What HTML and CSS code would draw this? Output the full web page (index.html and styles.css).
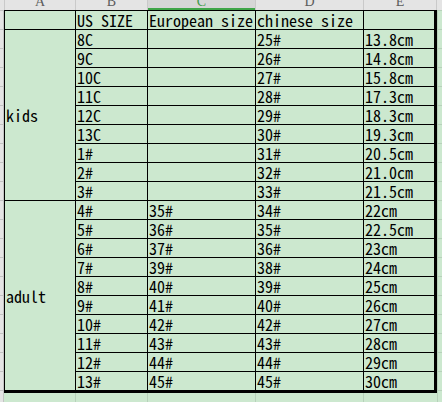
FILE: index.html
```html
<!DOCTYPE html>
<html>
<head>
<meta charset="utf-8">
<link rel="stylesheet" href="styles.css">
</head>
<body>
<div class="sheet">
  <div class="col-head">
    <div class="corner"></div>
    <div class="hcell w70"><span>A</span></div>
    <div class="hcell w71"><span>B</span></div>
    <div class="hcell w107 sel"><span>C</span></div>
    <div class="hcell w107"><span>D</span></div>
    <div class="hcell w72"><span>E</span></div>
    <div class="hcell rest"></div>
  </div>
  <div class="body-row">
    <div class="gutter"></div>
    <div class="area">
      <div class="table">
        <div class="c"></div><div class="c">US SIZE</div><div class="c">European size</div><div class="c">chinese size</div><div class="c"></div>

        <div class="c merged kids">kids</div>
        <div class="c">8C</div><div class="c"></div><div class="c">25#</div><div class="c">13.8cm</div>
        <div class="c">9C</div><div class="c"></div><div class="c">26#</div><div class="c">14.8cm</div>
        <div class="c">10C</div><div class="c"></div><div class="c">27#</div><div class="c">15.8cm</div>
        <div class="c">11C</div><div class="c"></div><div class="c">28#</div><div class="c">17.3cm</div>
        <div class="c">12C</div><div class="c"></div><div class="c">29#</div><div class="c">18.3cm</div>
        <div class="c">13C</div><div class="c"></div><div class="c">30#</div><div class="c">19.3cm</div>
        <div class="c">1#</div><div class="c"></div><div class="c">31#</div><div class="c">20.5cm</div>
        <div class="c">2#</div><div class="c"></div><div class="c">32#</div><div class="c">21.0cm</div>
        <div class="c">3#</div><div class="c"></div><div class="c">33#</div><div class="c">21.5cm</div>

        <div class="c merged adult">adult</div>
        <div class="c">4#</div><div class="c">35#</div><div class="c">34#</div><div class="c">22cm</div>
        <div class="c">5#</div><div class="c">36#</div><div class="c">35#</div><div class="c">22.5cm</div>
        <div class="c">6#</div><div class="c">37#</div><div class="c">36#</div><div class="c">23cm</div>
        <div class="c">7#</div><div class="c">39#</div><div class="c">38#</div><div class="c">24cm</div>
        <div class="c">8#</div><div class="c">40#</div><div class="c">39#</div><div class="c">25cm</div>
        <div class="c">9#</div><div class="c">41#</div><div class="c">40#</div><div class="c">26cm</div>
        <div class="c">10#</div><div class="c">42#</div><div class="c">42#</div><div class="c">27cm</div>
        <div class="c">11#</div><div class="c">43#</div><div class="c">43#</div><div class="c">28cm</div>
        <div class="c">12#</div><div class="c">44#</div><div class="c">44#</div><div class="c">29cm</div>
        <div class="c">13#</div><div class="c">45#</div><div class="c">45#</div><div class="c">30cm</div>
      </div>
    </div>
  </div>
</div>
</body>
</html>
```

FILE: styles.css
```css
html, body {
  margin: 0;
  padding: 0;
}

body {
  width: 442px;
  height: 402px;
  overflow: hidden;
  background: #cce8cf;
}

.sheet {
  display: flex;
  flex-direction: column;
  width: 442px;
  height: 402px;
}

/* column header strip */
.col-head {
  display: flex;
  gap: 1px;
  height: 10px;
  background: #c9c9c9;
  flex: none;
}

.corner {
  width: 4px;
  background: #e4e4e4;
  flex: none;
}

.hcell {
  box-sizing: border-box;
  display: flex;
  justify-content: center;
  align-items: flex-end;
  overflow: hidden;
  background: #e4e4e4;
  color: #5c5c5c;
  font: 14px "Liberation Serif", serif;
  flex: none;
}

.hcell span {
  line-height: 14px;
  margin-bottom: 1px;
}

.w70 { width: 70px; }
.w71 { width: 71px; }
.w107 { width: 107px; }
.w72 { width: 72px; }
.rest { flex: 1; }

.hcell.sel {
  background: #d6d6d6;
  color: #3f9a46;
  border-bottom: 2px solid #3fa548;
}

.hcell.sel span {
  margin-bottom: -1px;
}

/* body */
.body-row {
  display: flex;
  flex: 1;
}

.gutter {
  width: 3px;
  flex: none;
  border-right: 1px solid #c3c3c3;
  background-color: #e4e4e4;
  background-image: repeating-linear-gradient(to bottom, #c3c3c3 0 1px, transparent 1px 19px);
}

.area {
  flex: 1;
  background-color: #cce8cf;
  background-image:
    repeating-linear-gradient(to bottom, #b7d1ba 0 1px, transparent 1px 19px),
    linear-gradient(#b7d1ba, #b7d1ba),
    linear-gradient(#b7d1ba, #b7d1ba),
    linear-gradient(#b7d1ba, #b7d1ba),
    linear-gradient(#b7d1ba, #b7d1ba),
    linear-gradient(#b7d1ba, #b7d1ba);
  background-size: 100% 100%, 1px 100%, 1px 100%, 1px 100%, 1px 100%, 1px 100%;
  background-position: 0 0, 71px 0, 143px 0, 251px 0, 359px 0, 433px 0;
  background-repeat: no-repeat;
}

.table {
  display: grid;
  grid-template-columns: 70px 71px 107px 107px 70px;
  grid-auto-rows: 18px;
  gap: 1px;
  width: max-content;
  padding: 1px 3px 3px 1px;
  background: #000;
}

.c {
  background: #cce8cf;
  color: #000;
  font-family: "Noto Sans Mono CJK SC", "Liberation Mono", monospace;
  font-size: 16px;
  line-height: 18px;
  padding-left: 1px;
  white-space: nowrap;
}

.merged {
  grid-column: 1;
  display: flex;
  align-items: center;
}

.kids {
  grid-row: span 9;
}

.adult {
  grid-row: span 10;
}
```
